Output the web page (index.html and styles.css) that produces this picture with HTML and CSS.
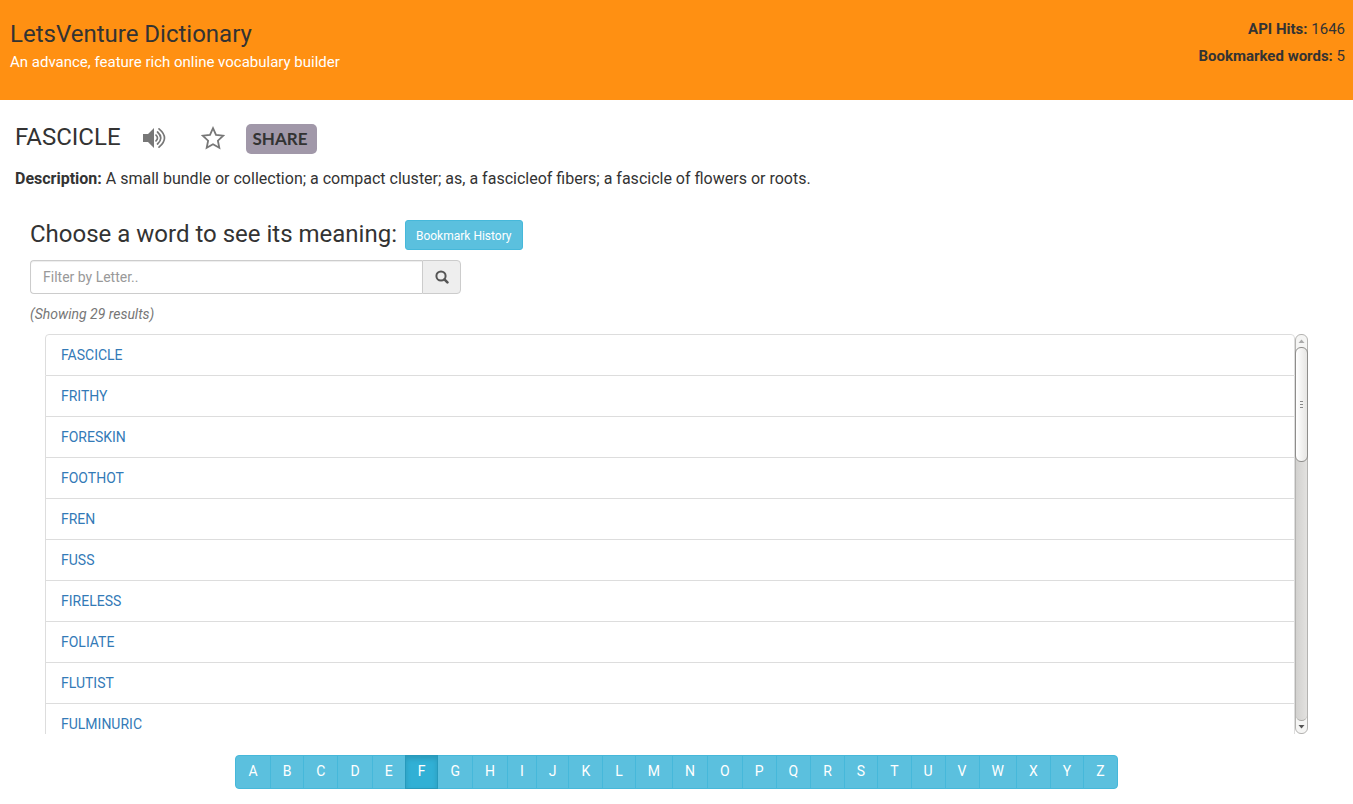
FILE: index.html
```html
<!DOCTYPE html>
<html lang="en">
<head>
<meta charset="utf-8">
<meta name="viewport" content="width=device-width, initial-scale=1">
<title>LetsVenture Dictionary</title>
<link rel="stylesheet" href="styles.css">
</head>
<body>
<header class="site-header">
  <div class="brand">
    <h1 class="title">LetsVenture Dictionary</h1>
    <p class="tagline">An advance, feature rich online vocabulary builder</p>
  </div>
  <div class="stats">
    <p class="stat"><b>API Hits:</b> 1646</p>
    <p class="stat"><b>Bookmarked words:</b> 5</p>
  </div>
</header>
<main>
  <section class="word">
    <div class="word-head">
      <h2 class="title">FASCICLE</h2>
      <button class="icon-btn speak" type="button" aria-label="Listen">
        <svg width="24" height="22" viewBox="0 0 24 22"><path d="M0 7h5l6-6v20l-6-6H0z" fill="#777"/><path d="M13 8.200q3 2.800 0 5.600M14.500 5q6.600 6 0 12M16 1.800q11 9.200 0 18.400" fill="none" stroke="#777" stroke-width="1.700" stroke-linecap="round"/></svg>
      </button>
      <button class="icon-btn star" type="button" aria-label="Bookmark">
        <svg width="24" height="24" viewBox="0 0 24 24"><path d="M12 2.200l3 6.600 7.200.9-5.300 5 1.400 7.100L12 18.300l-6.300 3.500 1.400-7.100-5.300-5 7.200-.9z" fill="none" stroke="#777" stroke-width="1.800" stroke-linejoin="miter"/></svg>
      </button>
      <button class="share" type="button">SHARE</button>
    </div>
    <p class="description"><b>Description:</b> A small bundle or collection; a compact cluster; as, a fascicleof fibers; a fascicle of flowers or roots.</p>
  </section>
  <section class="browse">
    <div class="browse-head">
      <h2 class="title">Choose a word to see its meaning:</h2>
      <button class="history" type="button">Bookmark History</button>
    </div>
    <form class="filter">
      <input class="filter-input" type="text" placeholder="Filter by Letter.." aria-label="Filter by Letter">
      <button class="filter-btn" type="button" aria-label="Search">
        <svg width="14" height="14" viewBox="0 0 14 14" fill="none" stroke="#555" stroke-width="2"><circle cx="6" cy="6" r="4.600"/><path d="M9.400 9.400l3 3" stroke-width="2.600" stroke-linecap="round"/></svg>
      </button>
    </form>
    <p class="count">(Showing 29 results)</p>
    <div class="results">
      <ul class="list">
        <li><a href="#">FASCICLE</a></li>
        <li><a href="#">FRITHY</a></li>
        <li><a href="#">FORESKIN</a></li>
        <li><a href="#">FOOTHOT</a></li>
        <li><a href="#">FREN</a></li>
        <li><a href="#">FUSS</a></li>
        <li><a href="#">FIRELESS</a></li>
        <li><a href="#">FOLIATE</a></li>
        <li><a href="#">FLUTIST</a></li>
        <li><a href="#">FULMINURIC</a></li>
      </ul>
      <div class="scrollbar" aria-hidden="true">
        <svg class="arrow" width="11" height="12" viewBox="0 0 11 12"><path d="M2.500 8h6L5.500 4.500z" fill="#aaa"/></svg>
        <div class="thumb"><span></span><span></span><span></span></div>
        <div class="track"></div>
        <svg class="arrow" width="11" height="12" viewBox="0 0 11 12"><path d="M2.500 4h6L5.500 7.500z" fill="#555"/></svg>
      </div>
    </div>
  </section>
</main>
<nav class="letters" aria-label="Letters">
  <button type="button">A</button><button type="button">B</button><button type="button">C</button><button type="button">D</button><button type="button">E</button><button type="button" class="active">F</button><button type="button">G</button><button type="button">H</button><button type="button">I</button><button type="button">J</button><button type="button">K</button><button type="button">L</button><button type="button">M</button><button type="button">N</button><button type="button">O</button><button type="button">P</button><button type="button">Q</button><button type="button">R</button><button type="button">S</button><button type="button">T</button><button type="button">U</button><button type="button">V</button><button type="button">W</button><button type="button">X</button><button type="button">Y</button><button type="button">Z</button>
</nav>
</body>
</html>
```
FILE: styles.css
```css
* {
  box-sizing: border-box;
}

body {
  margin: 0;
  background: #fff;
  color: #333;
  font-family: Roboto, sans-serif;
  font-size: 14px;
  line-height: 20px;
}

h1, h2, p, ul {
  margin: 0;
  padding: 0;
}

button, input {
  margin: 0;
  font: inherit;
}

svg {
  display: block;
}

.title {
  font-size: 24px;
  font-weight: 400;
  line-height: 28px;
}

.site-header {
  display: flex;
  justify-content: space-between;
  min-height: 100px;
  padding: 19px 8px 0 10px;
  background: #ff9012;
  font-size: 15px;
}

.brand {
  padding-top: 1px;
}

.tagline {
  margin-top: 4px;
  color: #fff;
}

.stats {
  display: flex;
  flex-direction: column;
  gap: 7px;
  text-align: right;
}

.word {
  padding: 23px 15px 0;
}

.word-head {
  display: flex;
  align-items: flex-start;
}

.icon-btn {
  padding: 0;
  border: 0;
  background: none;
}

.speak {
  margin: 4px 0 0 22px;
}

.star {
  margin: 3px 21px 0 34px;
}

.share {
  height: 30px;
  margin-top: 1px;
  padding: 0 10px 0 7px;
  border: 0;
  border-radius: 5px;
  background: #a198a9;
  color: #333;
  font-family: Lato, sans-serif;
  font-size: 17px;
  font-weight: 700;
}

.description {
  margin-top: 15px;
  font-size: 16px;
}

.browse {
  padding: 31px 30px 0;
}

.browse-head {
  display: flex;
  gap: 8px;
}

.history {
  height: 30px;
  padding: 1px 10px 0;
  border: 1px solid #46b8da;
  border-radius: 3px;
  background: #5bc0de;
  color: #fff;
  font-size: 12px;
}

.filter {
  display: flex;
  width: 33.333%;
  height: 34px;
  margin-top: 10px;
}

.filter-input {
  flex: 1;
  min-width: 0;
  padding: 6px 12px;
  border: 1px solid #ccc;
  border-right: 0;
  border-radius: 4px 0 0 4px;
  box-shadow: inset 0 1px 1px rgba(0, 0, 0, .075);
}

.filter-input::placeholder {
  color: #999;
}

.filter-btn {
  width: 39px;
  padding: 0 12px;
  border: 1px solid #ccc;
  border-radius: 0 4px 4px 0;
  background: #eee;
}

.count {
  margin-top: 10px;
  color: #777;
  font-style: italic;
}

.results {
  display: flex;
  height: 400px;
  margin: 10px 15px 0;
}

.list {
  flex: 1;
  overflow-y: auto;
  scrollbar-width: none;
  list-style: none;
}

.list li {
  padding: 10px 15px;
  border: 1px solid #ddd;
  border-top: 0;
}

.list li:first-child {
  border-top: 1px solid #ddd;
  border-radius: 4px 4px 0 0;
}

.list a {
  color: #337ab7;
  text-decoration: none;
}

.scrollbar {
  display: flex;
  flex-direction: column;
  width: 13px;
  border: 1px solid #b4b3b1;
  border-radius: 6px;
  background: #f5f5f4;
}

.thumb {
  z-index: 1;
  display: flex;
  flex-direction: column;
  flex-shrink: 0;
  align-items: center;
  justify-content: center;
  gap: 2px;
  height: 115px;
  margin: 0 -1px;
  border: 1px solid #8e8d8b;
  border-radius: 6px;
  background: linear-gradient(90deg, #fff, #e6e5e3);
}

.thumb span {
  width: 3px;
  height: 1px;
  background: #888;
}

.track {
  flex: 1;
  margin-top: -6px;
  border-bottom: 1px solid #aaa9a6;
  border-radius: 0 0 6px 6px;
  background: linear-gradient(90deg, #d2d1cf, #e2e1df);
}

.letters {
  display: flex;
  justify-content: center;
  margin-top: 21px;
}

.letters button {
  height: 34px;
  padding: 0 12px 2px;
  border: 1px solid #46b8da;
  background: #5bc0de;
  color: #fff;
}

.letters button + button {
  margin-left: -1px;
}

.letters button:first-child {
  border-radius: 4px 0 0 4px;
}

.letters button:last-child {
  border-radius: 0 4px 4px 0;
}

.letters .active {
  z-index: 1;
  border-color: #269abc;
  background: #31b0d5;
  box-shadow: inset 0 3px 5px rgba(0, 0, 0, .125);
}
```
